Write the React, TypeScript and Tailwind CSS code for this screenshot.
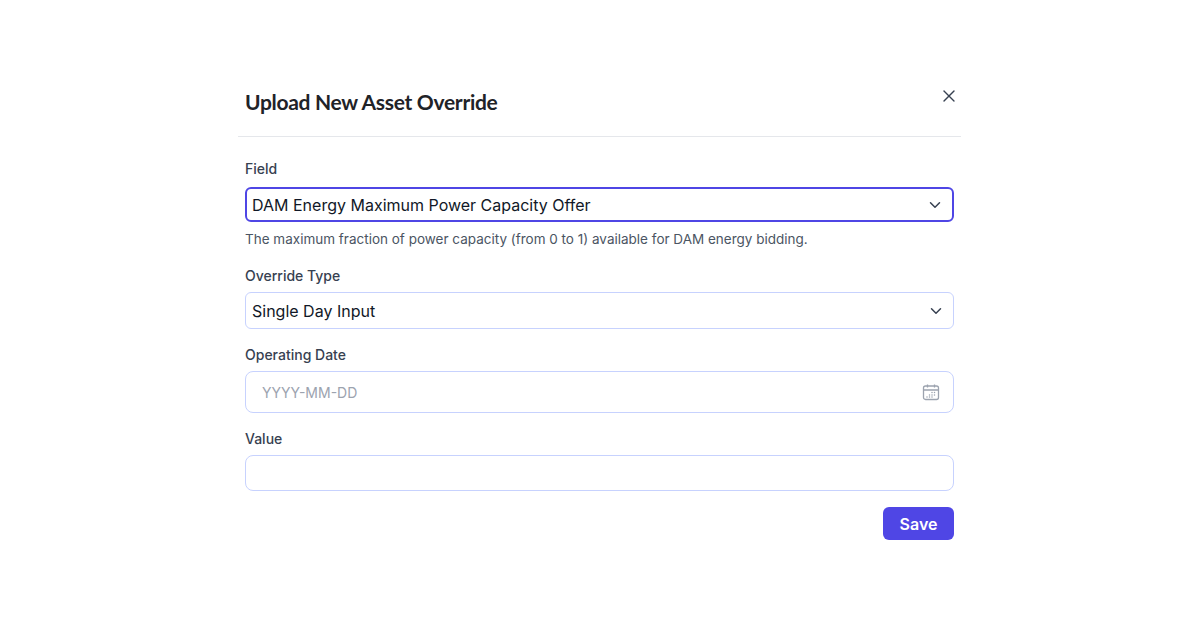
import { ChevronDown, X } from 'lucide-react';

const Label = ({ children, className = '' }: { children: string; className?: string }) => (
    <div className={`text-[14px] leading-[18px] font-medium text-[#374151] ${className}`}>{children}</div>
);

const App = () => {
    return (
        <div className="w-[1200px] h-[630px] bg-white font-[Inter,sans-serif]">
            <div className="ml-[238px] w-[723px] pt-[84px]">
                <div className="flex justify-between items-start pl-[7px] pr-[2px] h-[52px]">
                    <h1 className="font-[Lato,sans-serif] font-bold text-[21px] leading-[36px] tracking-[-0.3px] text-[#1f2328]">Upload New Asset Override</h1>
                    <X size={20} strokeWidth={1.6} className="text-[#374151] mt-[2px]" />
                </div>
                <div className="h-px bg-[#e5e7eb]" />
                <div className="px-[7px] pt-[23px]">
                    <Label>Field</Label>
                    <div className="mt-[9px] h-[35px] rounded-md border-2 border-[#4f46e5] flex items-center justify-between pl-[5px] pr-[8px] text-[16px] text-[#111827]">
                        DAM Energy Maximum Power Capacity Offer
                        <ChevronDown size={18} className="text-[#374151]" />
                    </div>
                    <div className="mt-[8px] text-[13.5px] leading-[18px] text-[#4b5563]">The maximum fraction of power capacity (from 0 to 1) available for DAM energy bidding.</div>
                    <Label className="mt-[19px]">Override Type</Label>
                    <div className="mt-[7px] h-[37px] rounded-md border border-[#c7d2fe] flex items-center justify-between pl-[6px] pr-[8px] text-[16px] text-[#111827]">
                        Single Day Input
                        <ChevronDown size={18} className="text-[#374151]" />
                    </div>
                    <Label className="mt-[17px]">Operating Date</Label>
                    <div className="mt-[7px] h-[42px] rounded-lg border border-[#c7d2fe] flex items-center justify-between pl-[16px] pr-[12px] text-[14px] text-[#9ca3af]">
                        YYYY-MM-DD
                        <svg width="20" height="20" viewBox="0 0 20 20" fill="none" stroke="#9ca3af" strokeWidth="1.3">
                            <rect x="2.5" y="4" width="15" height="13.5" rx="2" />
                            <path d="M2.5 8h15M6.5 2.5v3M13.5 2.5v3" />
                            <path d="M11 10.5h.01M13.5 10.5h.01M8.5 13h.01M11 13h.01M13.5 13h.01M6 15h.01M8.5 15h.01M11 15h.01" strokeLinecap="round" strokeWidth="1.5" />
                        </svg>
                    </div>
                    <Label className="mt-[17px]">Value</Label>
                    <div className="mt-[7px] h-[36px] rounded-lg border border-[#c7d2fe]" />
                    <div className="flex justify-end mt-[16px]">
                        <button className="w-[71px] h-[33px] rounded-md bg-[#4f46e5] text-white font-semibold text-[16px]">Save</button>
                    </div>
                </div>
            </div>
        </div>
    );
};

export default App;
